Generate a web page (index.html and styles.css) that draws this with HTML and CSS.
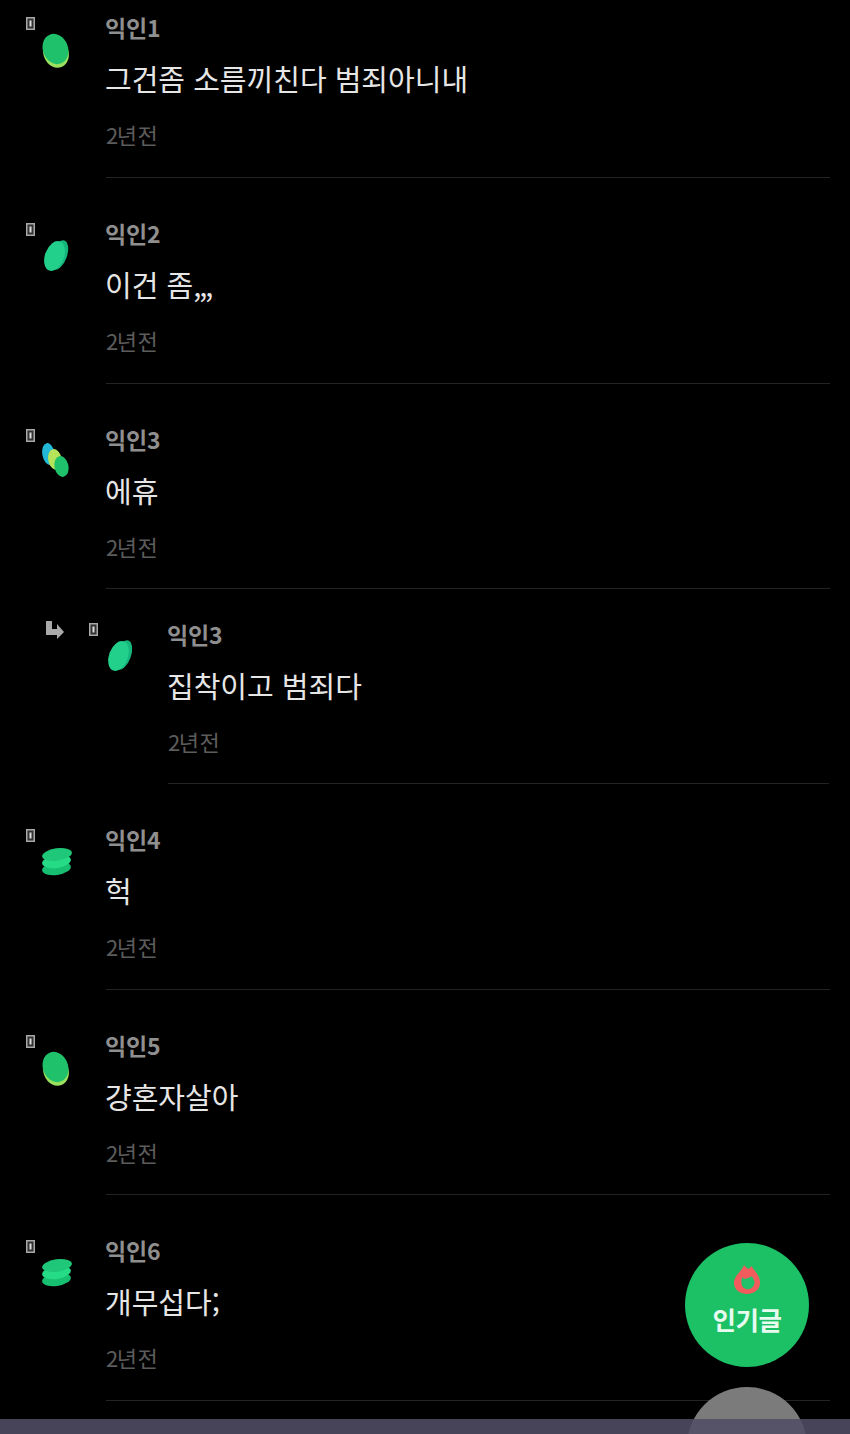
FILE: index.html
```html
<!DOCTYPE html>
<html lang="ko">
  <head>
    <meta charset="UTF-8">
    <title>댓글</title>
    <link rel="stylesheet" href="styles.css">
  </head>
  <body>
    <main class="comment-list">
      <article class="comment first">
        <div class="avatar-col">
          <svg class="mini-icon" viewBox="0 0 9 13"><rect x="0.75" y="0.75" width="7.5" height="11.5" fill="#333" stroke="#a8a8a8" stroke-width="1.5"/><rect x="3.5" y="3.5" width="2" height="6" fill="#ddd"/></svg>
          <svg class="avatar" viewBox="0 0 27 34"><ellipse cx="14" cy="19" rx="12.5" ry="15" transform="rotate(-22 14 19)" fill="#9be15d"/><ellipse cx="13.5" cy="15" rx="12.5" ry="15.5" transform="rotate(-22 13.5 15)" fill="#1fc16b"/></svg>
        </div>
        <div class="comment-body">
          <div class="name">익인1</div>
          <p class="text">그건좀 소름끼친다 범죄아니내</p>
          <div class="time">2년 전</div>
        </div>
      </article>
      <article class="comment">
        <div class="avatar-col">
          <svg class="mini-icon" viewBox="0 0 9 13"><rect x="0.75" y="0.75" width="7.5" height="11.5" fill="#333" stroke="#a8a8a8" stroke-width="1.5"/><rect x="3.5" y="3.5" width="2" height="6" fill="#ddd"/></svg>
          <svg class="avatar" viewBox="0 0 27 34"><ellipse cx="17" cy="15" rx="8" ry="15.5" transform="rotate(20 17 15)" fill="#15b57c"/><ellipse cx="12.5" cy="16" rx="9.5" ry="15.5" transform="rotate(20 12.5 16)" fill="#22d08c"/></svg>
        </div>
        <div class="comment-body">
          <div class="name">익인2</div>
          <p class="text">이건 좀<span class="tight">,,,</span></p>
          <div class="time">2년 전</div>
        </div>
      </article>
      <article class="comment">
        <div class="avatar-col">
          <svg class="mini-icon" viewBox="0 0 9 13"><rect x="0.75" y="0.75" width="7.5" height="11.5" fill="#333" stroke="#a8a8a8" stroke-width="1.5"/><rect x="3.5" y="3.5" width="2" height="6" fill="#ddd"/></svg>
          <svg class="avatar" viewBox="0 0 27 34"><ellipse cx="6.5" cy="8" rx="6.2" ry="11" transform="rotate(-10 6.5 8)" fill="#22b8d6"/><ellipse cx="13" cy="13.5" rx="6.8" ry="10.5" transform="rotate(-12 13 13.5)" fill="#b5e35a"/><ellipse cx="19.5" cy="20.5" rx="7" ry="10.5" transform="rotate(-12 19.5 20.5)" fill="#1fc16b"/></svg>
        </div>
        <div class="comment-body">
          <div class="name">익인3</div>
          <p class="text">에휴</p>
          <div class="time">2년 전</div>
        </div>
      </article>
      <article class="comment reply">
        <svg class="reply-arrow" viewBox="0 0 19 18"><path d="M1 0h6v8h5V3l7 8-7 7v-4H1z" fill="#a9a9a9"/></svg>
        <div class="avatar-col">
          <svg class="mini-icon" viewBox="0 0 9 13"><rect x="0.75" y="0.75" width="7.5" height="11.5" fill="#333" stroke="#a8a8a8" stroke-width="1.5"/><rect x="3.5" y="3.5" width="2" height="6" fill="#ddd"/></svg>
          <svg class="avatar" viewBox="0 0 27 34"><ellipse cx="18" cy="15" rx="8" ry="15.5" transform="rotate(20 18 15)" fill="#15b57c"/><ellipse cx="13.5" cy="16" rx="9.5" ry="15.5" transform="rotate(20 13.5 16)" fill="#22d08c"/></svg>
        </div>
        <div class="comment-body">
          <div class="name">익인3</div>
          <p class="text">집착이고 범죄다</p>
          <div class="time">2년 전</div>
        </div>
      </article>
      <article class="comment">
        <div class="avatar-col">
          <svg class="mini-icon" viewBox="0 0 9 13"><rect x="0.75" y="0.75" width="7.5" height="11.5" fill="#333" stroke="#a8a8a8" stroke-width="1.5"/><rect x="3.5" y="3.5" width="2" height="6" fill="#ddd"/></svg>
          <svg class="avatar" viewBox="0 0 27 34"><ellipse cx="14.5" cy="22.5" rx="14.5" ry="6.5" transform="rotate(-8 14.5 22.5)" fill="#17c070"/><ellipse cx="14.5" cy="15.5" rx="14.5" ry="6.5" transform="rotate(-8 14.5 15.5)" fill="#26db85"/><ellipse cx="15" cy="8.5" rx="15" ry="6.2" transform="rotate(-8 15 8.5)" fill="#1fc878"/></svg>
        </div>
        <div class="comment-body">
          <div class="name">익인4</div>
          <p class="text">헉</p>
          <div class="time">2년 전</div>
        </div>
      </article>
      <article class="comment">
        <div class="avatar-col">
          <svg class="mini-icon" viewBox="0 0 9 13"><rect x="0.75" y="0.75" width="7.5" height="11.5" fill="#333" stroke="#a8a8a8" stroke-width="1.5"/><rect x="3.5" y="3.5" width="2" height="6" fill="#ddd"/></svg>
          <svg class="avatar" viewBox="0 0 27 34"><ellipse cx="14" cy="19" rx="12.5" ry="15" transform="rotate(-22 14 19)" fill="#9be15d"/><ellipse cx="13.5" cy="15" rx="12.5" ry="15.5" transform="rotate(-22 13.5 15)" fill="#1fc16b"/></svg>
        </div>
        <div class="comment-body">
          <div class="name">익인5</div>
          <p class="text">걍혼자살아</p>
          <div class="time">2년 전</div>
        </div>
      </article>
      <article class="comment">
        <div class="avatar-col">
          <svg class="mini-icon" viewBox="0 0 9 13"><rect x="0.75" y="0.75" width="7.5" height="11.5" fill="#333" stroke="#a8a8a8" stroke-width="1.5"/><rect x="3.5" y="3.5" width="2" height="6" fill="#ddd"/></svg>
          <svg class="avatar" viewBox="0 0 27 34"><ellipse cx="14.5" cy="22.5" rx="14.5" ry="6.5" transform="rotate(-8 14.5 22.5)" fill="#17c070"/><ellipse cx="14.5" cy="15.5" rx="14.5" ry="6.5" transform="rotate(-8 14.5 15.5)" fill="#26db85"/><ellipse cx="15" cy="8.5" rx="15" ry="6.2" transform="rotate(-8 15 8.5)" fill="#1fc878"/></svg>
        </div>
        <div class="comment-body">
          <div class="name">익인6</div>
          <p class="text">개무섭다;</p>
          <div class="time">2년 전</div>
        </div>
      </article>
    </main>

    <button class="fab fab-popular" type="button">
      <svg class="flame" viewBox="0 0 30 32"><path d="M12 1C13 3 15 5 17 5C18 4 19 3 20 2C21 5 24 7 26 11C28 14 29 17 29 20C29 27 23 32 15 32C7 32 1 27 1 20C1 13 8 9 12 1Z" fill="#f25c5c"/><path d="M10 14C12 16 14 16 16 15C18 14 19 14 20 13C22 15 23 18 23 20C23 24 19 27 16 27C12 27 9 24 9 20C9 18 9 16 10 14Z" fill="#1fc16b"/></svg>
      <span>인기글</span>
    </button>
    <svg class="fab-gray" viewBox="0 0 120 47"><circle cx="60" cy="60" r="60" fill="#7c7b7c"/></svg>
    <div class="bottom-bar"></div>
  </body>
</html>
```

FILE: styles.css
```css
html, body {
  margin: 0;
  height: 1434px;
  overflow: hidden;
  background-color: #000;
}
body {
  position: relative;
  font-family: "Noto Sans CJK KR", "Noto Sans", sans-serif;
}
.comment-list {
  display: flex;
  flex-direction: column;
}
.comment {
  display: flex;
  height: 205.5px;
  padding-right: 20px;
}
.comment.first {
  height: 178px;
}
.comment.first .comment-body {
  padding-top: 11px;
}
.comment.first .avatar-col {
  padding-top: 17px;
}
.comment.reply {
  height: 195px;
  padding-right: 21px;
}
.avatar-col {
  display: flex;
  flex-direction: column;
  align-items: flex-start;
  flex: none;
  width: 80px;
  margin-left: 26px;
  padding-top: 45px;
  box-sizing: border-box;
}
.mini-icon {
  width: 9px;
  height: 13px;
}
.avatar {
  width: 27px;
  height: 34px;
  margin: 4px 0 0 16px;
  overflow: visible;
}
.reply-arrow {
  flex: none;
  width: 19px;
  height: 18px;
  margin: 32px 0 0 45px;
}
.reply .avatar-col {
  width: 79px;
  margin-left: 25px;
  padding-top: 34px;
}
.comment-body {
  flex: 1;
  padding-top: 39px;
  border-bottom: 1px solid #232326;
  box-sizing: border-box;
}
.reply .comment-body {
  padding-top: 29px;
}
.name {
  height: 32px;
  margin-left: -1px;
  font-size: 23px;
  line-height: 32px;
  font-weight: 700;
  letter-spacing: -0.2px;
  color: #8f8f8f;
}
.text {
  height: 40px;
  margin: 15px 0 0 -1px;
  font-size: 29px;
  line-height: 40px;
  letter-spacing: 0;
  color: #e6e6e6;
}
.tight {
  letter-spacing: -2px;
}
.time {
  height: 30px;
  margin-top: 21px;
  font-size: 22px;
  line-height: 30px;
  letter-spacing: -1.5px;
  word-spacing: -2.5px;
  color: #5c5c5c;
}
.fab {
  position: absolute;
  border-radius: 50%;
}
.fab-popular {
  left: 685px;
  top: 1243px;
  display: flex;
  flex-direction: column;
  align-items: center;
  gap: 9px;
  width: 124px;
  height: 124px;
  padding: 21px 0 0;
  border: none;
  background-color: #1cc065;
  color: #e8fbf0;
  font-family: inherit;
  font-size: 25.5px;
  line-height: 32px;
  font-weight: 700;
  letter-spacing: -0.5px;
}
.flame {
  flex: none;
  width: 28px;
  height: 30px;
}
.fab-gray {
  position: absolute;
  left: 687px;
  bottom: 0;
  width: 120px;
  height: 47px;
}
.bottom-bar {
  position: absolute;
  left: 0;
  right: 0;
  bottom: 0;
  height: 15px;
  background-color: rgba(81, 76, 101, 0.88);
}
```
